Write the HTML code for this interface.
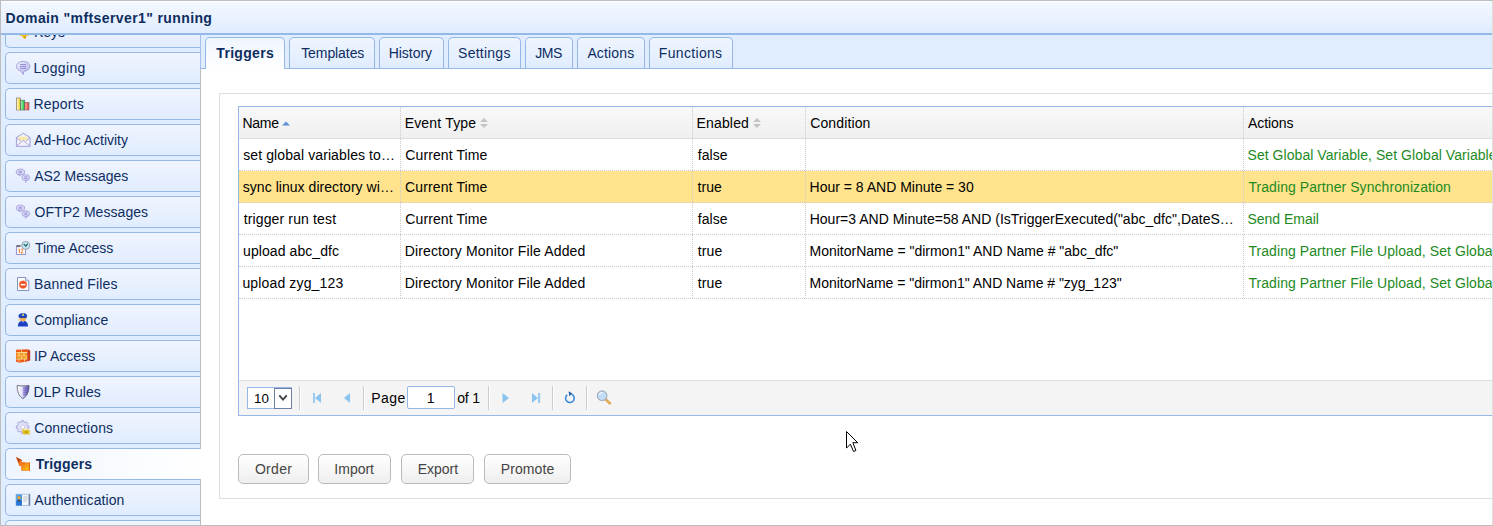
<!DOCTYPE html>
<html lang="en">
<head>
<meta charset="utf-8">
<title>Domain "mftserver1" running</title>
<style>
*{box-sizing:border-box;}
html,body{margin:0;padding:0;}
body{width:1493px;height:526px;overflow:hidden;position:relative;background:#fff;
  font-family:"Liberation Sans",Arial,sans-serif;font-size:14px;color:#000;}
.abs{position:absolute;}
.t{position:relative;white-space:pre;}
/* window frame */
#frameT{left:0;top:0;width:1493px;height:1px;background:#bdbdbd;}
#frameL{left:0;top:0;width:1px;height:526px;background:#bdbdbd;}
#frameR{left:1492px;top:1px;width:1px;height:524px;background:#dedede;}
#frameB{left:0;top:525px;width:1493px;height:1px;background:#bdbdbd;}
/* header */
#hdr{left:1px;top:1px;width:1492px;height:34px;border-top:1px solid #fdfeff;border-bottom:2px solid #95b8e7;
  background:linear-gradient(to bottom,#f3f8ff 0,#e0ecff 100%);}
#hdr>span{position:absolute;left:5px;top:8px;line-height:16px;font-weight:bold;color:#0e2d5f;white-space:nowrap;}
/* sidebar */
#side{left:1px;top:35px;width:199px;height:490px;background:#e0ecff;overflow:hidden;}
#vline{left:200px;top:35px;width:1px;height:490px;background:#bcbcbc;}
#vline2{left:200px;top:35px;width:1px;height:34px;background:#a5bee8;}
.it{position:absolute;left:4px;width:196px;height:32px;border:1px solid #95b8e7;border-right:0;border-radius:5px 0 0 5px;
  background:linear-gradient(to bottom,#eff5ff 0,#e0ecff 100%);color:#0e2d5f;white-space:nowrap;}
.it>span{position:absolute;left:28px;top:7px;line-height:16px;}
.it svg{position:absolute;left:9px;top:7px;width:16px;height:16px;}
.it.sel{background:linear-gradient(to right,#eff5ff 0,#ffffff 100%);font-weight:bold;}
#sidesel{left:200px;top:449px;width:1px;height:30px;background:#fff;}
/* main */
#main{left:201px;top:35px;width:1292px;height:490px;background:#fff;}
#tabstrip{left:0;top:0;width:1292px;height:34px;background:#e0ecff;border-bottom:1px solid #95b8e7;}
.tab{position:absolute;top:2px;height:31px;border:1px solid #95b8e7;border-bottom:0;border-radius:5px 5px 0 0;
  background:linear-gradient(to bottom,#eff5ff 0,#e0ecff 100%);color:#0e2d5f;text-align:center;line-height:30px;white-space:nowrap;}
.tab.sel{background:linear-gradient(to bottom,#eff5ff 0,#ffffff 100%);font-weight:bold;height:32px;}
#box{left:18px;top:58px;width:1290px;height:406px;border:1px solid #ddd;}
/* grid */
#grid{left:37px;top:71px;width:1270px;height:310px;border:1px solid #95b8e7;background:#fff;}
#ghead{left:0;top:0;width:1268px;height:32px;border-bottom:1px solid #ddd;background:linear-gradient(to bottom,#f9f9f9 0,#efefef 100%);}
.hc{position:absolute;top:0;height:31px;border-right:1px dotted #ccc;padding-left:4px;line-height:33px;white-space:nowrap;}
.sa{margin-left:3px;vertical-align:-1px;}
.row{position:absolute;left:0;width:1268px;height:32px;border-bottom:1px dotted #ccc;}
.row.sel{background:#ffe48d;}
.c{position:absolute;top:0;height:31px;border-right:1px dotted #ccc;padding:0 4px;line-height:33px;white-space:nowrap;overflow:hidden;text-overflow:clip;}
.c1{left:0;width:162px;}
.c2{left:162px;width:292px;}
.c3{left:454px;width:113px;}
.c4{left:567px;width:438px;}
.c5{left:1005px;width:263px;border-right:0;color:#1e8a1e;text-overflow:clip;}
#pager{left:0;top:273px;width:1268px;height:35px;border-top:1px solid #ddd;background:#f4f4f4;}
.sep{position:absolute;top:5px;width:2px;height:24px;background:#ccc;border-right:1px solid #fff;}
#psel{left:8px;top:6px;width:45px;height:22px;border:1px solid #95b8e7;background:#fff;font-size:13px;line-height:20px;}
#psel>span{position:absolute;left:6px;top:1px;font-size:13.33px;}
#pselb{position:absolute;left:26px;top:0px;width:18px;height:21px;border:1px solid #6f7fa6;background:#fff;}
#pselb svg{position:absolute;left:0;top:0;}
.ptx{top:9px;line-height:16px;white-space:nowrap;}
#pinp{left:168px;top:5px;width:48px;height:23px;border:1px solid #95b8e7;border-radius:2px;background:#fff;text-align:center;line-height:23px;}
.btn{position:absolute;top:419px;height:30px;border:1px solid #bbb;border-radius:5px;color:#444;text-align:center;line-height:29px;
  background:linear-gradient(to bottom,#ffffff 0,#eeeeee 100%);}
</style>
</head>
<body>
<div id="hdr" class="abs"><span><span class="t" id="hdrt" style="letter-spacing:0.393px;left:-0.40px">Domain "mftserver1" running</span></span></div>

<div id="side" class="abs">
  <div class="it" style="top:-19px"><svg viewBox="0 0 16 16"><path d="M5 9h8.5v3H11v2.5H8.5L7 12H5z" fill="#f2c41a"/><path d="M8.5 12l1 2.5h1.5V12z" fill="#d9a400"/></svg><span><span class="t" id="s0">Keys</span></span></div>
  <div class="it" style="top:17px"><svg viewBox="0 0 16 16"><defs><linearGradient id="gb" x1="0" y1="0" x2="1" y2="1"><stop offset="0" stop-color="#f2f1fd"/><stop offset="1" stop-color="#b5b0e8"/></linearGradient></defs><path d="M8.3 1.4c3.8 0 6.6 2.1 6.6 4.9 0 2.7-2.6 4.7-6 4.9l-.6 3.3-2.6-3.6C3 10.200 1.400 8.500 1.400 6.300c0-2.800 3-4.900 6.900-4.900z" fill="url(#gb)" stroke="#9d98d4" stroke-width="0.9"/><path d="M5 4.500h6.200M5 6.500h6.200M5 8.400h6.200" stroke="#8c86d6" stroke-width="0.9"/></svg><span><span class="t" id="s1" style="letter-spacing:0.339px;left:-0.54px">Logging</span></span></div>
  <div class="it" style="top:53px"><svg viewBox="0 0 16 16"><rect x="1.500" y="2" width="4" height="12" fill="#f6d04a" stroke="#6b6b6b" stroke-width="0.6"/><rect x="2" y="2.500" width="1.500" height="11.500" fill="#fdf0a8"/><rect x="5.500" y="4.200" width="4.200" height="9.800" fill="#3fce5a" stroke="#5f5f5f" stroke-width="0.600"/><rect x="6" y="4.700" width="1.500" height="9" fill="#8ce79b"/><rect x="9.700" y="6.600" width="4.300" height="7.400" fill="#ee5a55" stroke="#5f5f5f" stroke-width="0.600"/><rect x="10.200" y="7.100" width="1.500" height="6.700" fill="#f69a94"/></svg><span><span class="t" id="s2" style="letter-spacing:0.212px;left:-0.47px">Reports</span></span></div>
  <div class="it" style="top:89px"><svg viewBox="0 0 16 16"><path d="M1.400 5.600L8.200 1.300 15 5.600V14.300H1.400z" fill="#f4f3fc" stroke="#9a94d2" stroke-width="0.900"/><rect x="3.600" y="4.800" width="8.800" height="3.400" fill="#f8eaa6"/><path d="M1.500 14.200L8.200 8.300 14.900 14.200M1.500 5.800l4.300 3.300M14.900 5.800l-4.300 3.300" fill="none" stroke="#9a94d2" stroke-width="0.800"/></svg><span><span class="t" id="s3" style="letter-spacing:-0.027px;left:0.17px">Ad-Hoc Activity</span></span></div>
  <div class="it" style="top:125px"><svg viewBox="0 0 16 16"><ellipse cx="5.400" cy="4" rx="4.200" ry="2.900" fill="#dcdaf6" stroke="#9d98d4" stroke-width="0.800"/><path d="M3 6l1.800 2.200.8-1.700z" fill="#c1bdec" stroke="#9d98d4" stroke-width="0.500"/><path d="M3.600 3.300h3.600M3.600 4.800h3.600" stroke="#8c86d6" stroke-width="0.800"/><ellipse cx="10.800" cy="9.600" rx="3.900" ry="2.900" fill="#dcdaf6" stroke="#9d98d4" stroke-width="0.800"/><path d="M10.200 12.300l.5 2.300 1.900-2.600z" fill="#c1bdec" stroke="#9d98d4" stroke-width="0.500"/><path d="M9.200 8.900h3.400M9.200 10.400h3.400" stroke="#8c86d6" stroke-width="0.800"/></svg><span><span class="t" id="s4" style="letter-spacing:0.001px;left:0.17px">AS2 Messages</span></span></div>
  <div class="it" style="top:161px"><svg viewBox="0 0 16 16"><ellipse cx="5.400" cy="4" rx="4.200" ry="2.900" fill="#dcdaf6" stroke="#9d98d4" stroke-width="0.800"/><path d="M3 6l1.800 2.200.8-1.700z" fill="#c1bdec" stroke="#9d98d4" stroke-width="0.500"/><path d="M3.600 3.300h3.600M3.600 4.800h3.600" stroke="#8c86d6" stroke-width="0.800"/><ellipse cx="10.800" cy="9.600" rx="3.900" ry="2.900" fill="#dcdaf6" stroke="#9d98d4" stroke-width="0.800"/><path d="M10.200 12.300l.5 2.300 1.900-2.600z" fill="#c1bdec" stroke="#9d98d4" stroke-width="0.500"/><path d="M9.200 8.900h3.400M9.200 10.400h3.400" stroke="#8c86d6" stroke-width="0.800"/></svg><span><span class="t" id="s5" style="letter-spacing:0.052px;left:0.59px">OFTP2 Messages</span></span></div>
  <div class="it" style="top:197px"><svg viewBox="0 0 16 16"><rect x="1.400" y="5.700" width="9.200" height="8.700" fill="#fbfbff" stroke="#8d88c8" stroke-width="0.900"/><rect x="1.800" y="5.300" width="3.600" height="1.800" fill="#6b6b78"/><path d="M3.400 9.200h1v3.600M6 9.600c.3-.7 2-.7 2 .4 0 1-2 1.600-2 2.800h2.200" fill="none" stroke="#ee7a2a" stroke-width="1"/><circle cx="10.800" cy="5.400" r="4" fill="#c3e6ee" stroke="#9a9aa8" stroke-width="0.900"/><path d="M8.700 4.100l2.100 2.100 1.900-2.600" fill="none" stroke="#1f5a6a" stroke-width="1.200"/></svg><span><span class="t" id="s6" style="letter-spacing:-0.043px;left:0.91px">Time Access</span></span></div>
  <div class="it" style="top:233px"><svg viewBox="0 0 16 16"><path d="M2.500 1.500h8l3.300 3.300v9.700H2.500z" fill="#fdfdff" stroke="#7d88b4" stroke-width="0.900"/><path d="M10.500 1.500v3.300h3.300" fill="#dfe6f7" stroke="#7d88b4" stroke-width="0.700"/><circle cx="8" cy="8.600" r="3.900" fill="#ee4a1e"/><circle cx="8" cy="8.600" r="3.900" fill="none" stroke="#f7a07a" stroke-width="0.500"/><rect x="5.600" y="7.800" width="4.800" height="1.700" fill="#fff3ec"/></svg><span><span class="t" id="s7" style="letter-spacing:0.142px;left:0.12px">Banned Files</span></span></div>
  <div class="it" style="top:269px"><svg viewBox="0 0 16 16"><path d="M3.300 4.400c0-2.200 2-3.500 4.600-3.500 2.400 0 4.300 1.200 4.300 3.300l-1 1.600H4.600z" fill="#2446c4"/><path d="M7.200 1.600h1.800v2.400H7.200z" fill="#b7c96a"/><path d="M4.400 5.400h7v1H4.400z" fill="#16246e"/><rect x="5.200" y="5.900" width="5.500" height="3.300" rx="1.200" fill="#f6b04c"/><path d="M3.300 7.200h2v1.300h-2z" fill="#f9c877"/><path d="M2.900 14.600c0-3.800 1.600-5.600 5.100-5.600s5 1.800 5 5.600z" fill="#1f3fc2"/><path d="M7 9.200l1 1.600 1-1.600z" fill="#dfe6ff"/></svg><span><span class="t" id="s8" style="letter-spacing:0.008px;left:0.20px">Compliance</span></span></div>
  <div class="it" style="top:305px"><svg viewBox="0 0 16 16"><path d="M1 1.800l11.200-.6v12.300L4 14.800 1 13.400z" fill="#ee5a14"/><path d="M12.200 1.200l3 1v10.300l-3 1z" fill="#c8401a"/><path d="M1.200 4.800l11-.3M1.200 8l11-.2M1.200 11l11-.1" stroke="#fbe9a8" stroke-width="1"/><path d="M2 5.300h9.800v2.200H2zM2 8.500h9.800v2H2z" fill="#f4a422"/><path d="M6.500 1.600v3M4 5v3M9 5v3M6.500 8v3M4 11v3M9.500 11v2.500" stroke="#fde8b0" stroke-width="0.700"/><path d="M9.800 8.600h2.200v2H9.800z" fill="#f7d23a"/></svg><span><span class="t" id="s9" style="letter-spacing:0.003px;left:-0.09px">IP Access</span></span></div>
  <div class="it" style="top:341px"><svg viewBox="0 0 16 16"><defs><linearGradient id="gs" x1="0" y1="0" x2="1" y2="0"><stop offset="0" stop-color="#ffffff"/><stop offset="0.400" stop-color="#e6e3fb"/><stop offset="0.650" stop-color="#9d93e0"/><stop offset="1" stop-color="#5a4fb0"/></linearGradient></defs><path d="M2.200 1.400c3.800.7 7.800.7 11.800 0 .2 5.600-1.600 10.600-6.200 13.300C3.600 12 2 7 2.200 1.400z" fill="url(#gs)" stroke="#55556a" stroke-width="0.800"/><path d="M8 4.300h5.400M8 6.300h5M8 8.300h4.300M8 10.300h3.200" stroke="#4d44a0" stroke-width="0.700" opacity="0.700"/></svg><span><span class="t" id="s10" style="letter-spacing:0.077px;left:-0.44px">DLP Rules</span></span></div>
  <div class="it" style="top:377px"><svg viewBox="0 0 16 16"><path d="M13.90 5.90 L13.90 8.10 L12.46 8.17 L11.86 9.61 L12.84 10.68 L11.28 12.24 L10.21 11.26 L8.77 11.86 L8.70 13.30 L6.50 13.30 L6.43 11.86 L4.99 11.26 L3.92 12.24 L2.36 10.68 L3.34 9.61 L2.74 8.17 L1.30 8.10 L1.30 5.90 L2.74 5.83 L3.34 4.39 L2.36 3.32 L3.92 1.76 L4.99 2.74 L6.43 2.14 L6.50 0.70 L8.70 0.70 L8.77 2.14 L10.21 2.74 L11.28 1.76 L12.84 3.32 L11.86 4.39 L12.46 5.83z" fill="#e4e2f7" stroke="#a29dd6" stroke-width="0.900" stroke-linejoin="round"/><circle cx="7.600" cy="7" r="2.100" fill="#f6f5fd" stroke="#b4b0e0" stroke-width="0.600"/><path d="M7 10.200c0-1.700 3.200-2.200 3.700-.7.600-1.300 4-.8 4 1.300l-.3 3.600h-2.300l-.6-1-.8 1H8.300z" fill="#e2c21c"/><path d="M7.300 9.600c.6-1.300 2.700-1.500 3.400-.3.700-1 3.300-.8 3.800.7-1-.8-2.600-.8-3.500.2-1-.9-2.600-1-3.700-.6z" fill="#fbf8e4"/><path d="M10.300 11l.9 2.600.9-2.400" fill="none" stroke="#a8880c" stroke-width="0.700"/></svg><span><span class="t" id="s11" style="letter-spacing:0.108px;left:0.20px">Connections</span></span></div>
  <div class="it sel" style="top:413px"><svg viewBox="0 0 16 16"><defs><linearGradient id="gt" x1="0" y1="0" x2="1" y2="1"><stop offset="0" stop-color="#f0701c"/><stop offset="1" stop-color="#f7cc10"/></linearGradient></defs><path d="M1 1l6.200 3.200L6.400 6l4.200.2V6.400H15v8.400H6.200V9.400L4.400 10.600z" fill="#f07a1c"/><path d="M1 1l3 6 .8-2.600L7.600 4.600z" fill="#b8401c"/><rect x="6.800" y="7.200" width="7.300" height="7" fill="url(#gt)"/><path d="M14.400 6.400v8.400" stroke="#e46a10" stroke-width="1.200"/></svg><span><span class="t" id="s12" style="letter-spacing:0.164px;left:1.73px">Triggers</span></span></div>
  <div class="it" style="top:449px"><svg viewBox="0 0 16 16"><rect x="1" y="2.200" width="14" height="11.300" fill="#f2f5fa" stroke="#8fb4e4" stroke-width="0.700"/><rect x="1.200" y="2.400" width="5.800" height="11" fill="#4a9be6"/><rect x="1.200" y="8.600" width="5.800" height="4.800" fill="#2a76d8"/><circle cx="4" cy="5.700" r="1.600" fill="#f4a020"/><path d="M2.400 9.200c0-2 3.200-2 3.200 0z" fill="#55412a"/><path d="M8.400 5h4M8.400 7h4M8.400 9h3" stroke="#b8bec8" stroke-width="0.900"/><path d="M14.300 2.200v11.300" stroke="#6c7c98" stroke-width="1.400"/></svg><span><span class="t" id="s13" style="letter-spacing:0.102px;left:0.35px">Authentication</span></span></div>
  <div class="it" style="top:485px"><span>&nbsp;</span></div>
</div>

<div id="main" class="abs">
  <div id="tabstrip" class="abs">
    <div class="tab sel" style="left:4px;width:80px"><span class="t" id="tab0" style="letter-spacing:0.312px;left:0.19px">Triggers</span></div>
    <div class="tab" style="left:88px;width:86px"><span class="t" id="tab1" style="letter-spacing:-0.082px;left:0.74px">Templates</span></div>
    <div class="tab" style="left:178px;width:65px"><span class="t" id="tab2" style="letter-spacing:-0.051px;left:-1.17px">History</span></div>
    <div class="tab" style="left:247px;width:73px"><span class="t" id="tab3" style="letter-spacing:0.240px;left:-0.13px">Settings</span></div>
    <div class="tab" style="left:324px;width:48px"><span class="t" id="tab4" style="letter-spacing:-0.542px;left:-0.49px">JMS</span></div>
    <div class="tab" style="left:376px;width:68px"><span class="t" id="tab5" style="letter-spacing:0.140px;left:-0.16px">Actions</span></div>
    <div class="tab" style="left:448px;width:84px"><span class="t" id="tab6" style="letter-spacing:0.323px;left:-0.37px">Functions</span></div>
  </div>
  <div id="box" class="abs"></div>
  <div id="grid" class="abs">
    <div id="ghead" class="abs">
      <div class="hc c1"><span class="t" id="h1" style="letter-spacing:-0.302px;left:-0.48px">Name</span><svg class="sa" width="8" height="10" viewBox="0 0 8 10"><path d="M0 6.500L4 2.500 8 6.500z" fill="#5b8fd6"/></svg></div>
      <div class="hc c2"><span class="t" id="h2" style="letter-spacing:0.183px;left:-0.35px">Event Type</span><svg class="sa" width="8" height="12" viewBox="0 0 8 12"><path d="M0 5L4 1 8 5z" fill="#c4c4c4"/><path d="M0 7L4 11 8 7z" fill="#c4c4c4"/></svg></div>
      <div class="hc c3"><span class="t" id="h3" style="letter-spacing:0.171px;left:-0.53px">Enabled</span><svg class="sa" width="8" height="12" viewBox="0 0 8 12"><path d="M0 5L4 1 8 5z" fill="#c4c4c4"/><path d="M0 7L4 11 8 7z" fill="#c4c4c4"/></svg></div>
      <div class="hc c4"><span class="t" id="h4" style="letter-spacing:0.135px;left:0.17px">Condition</span></div>
      <div class="hc c5" style="color:#000"><span class="t" id="h5" style="letter-spacing:-0.040px;left:-0.08px">Actions</span></div>
    </div>
    <div class="row" style="top:32px"><div class="c c1"><span class="t" id="r1c1" style="letter-spacing:0.106px;left:0.16px">set global variables to…</span></div><div class="c c2"><span class="t" id="r1c2" style="letter-spacing:0.107px;left:0.27px">Current Time</span></div><div class="c c3"><span class="t" id="r1c3" style="letter-spacing:0.099px;left:0.69px">false</span></div><div class="c c4"></div><div class="c c5"><span class="t" id="r1c5" style="letter-spacing:0.053px;left:-0.50px">Set Global Variable, Set Global Variable, Set Global Variable</span></div></div>
    <div class="row sel" style="top:64px"><div class="c c1"><span class="t" id="r2c1" style="letter-spacing:0.041px;left:-0.23px">sync linux directory wi…</span></div><div class="c c2"><span class="t" id="r2c2" style="letter-spacing:0.128px;left:0.07px">Current Time</span></div><div class="c c3"><span class="t" id="r2c3" style="letter-spacing:0.121px;left:0.41px">true</span></div><div class="c c4"><span class="t" id="r2c4" style="letter-spacing:-0.004px;left:-0.45px">Hour = 8 AND Minute = 30</span></div><div class="c c5"><span class="t" id="r2c5" style="letter-spacing:0.071px;left:0.42px">Trading Partner Synchronization</span></div></div>
    <div class="row" style="top:96px"><div class="c c1"><span class="t" id="r3c1" style="letter-spacing:0.137px;left:0.71px">trigger run test</span></div><div class="c c2"><span class="t" id="r3c2" style="letter-spacing:0.107px;left:0.27px">Current Time</span></div><div class="c c3"><span class="t" id="r3c3" style="letter-spacing:0.099px;left:0.69px">false</span></div><div class="c c4"><span class="t" id="r3c4" style="letter-spacing:0.014px;left:-0.35px">Hour=3 AND Minute=58 AND (IsTriggerExecuted("abc_dfc",DateS…</span></div><div class="c c5"><span class="t" id="r3c5" style="letter-spacing:-0.021px;left:-0.57px">Send Email</span></div></div>
    <div class="row" style="top:128px"><div class="c c1"><span class="t" id="r4c1" style="letter-spacing:0.083px;left:0.04px">upload abc_dfc</span></div><div class="c c2"><span class="t" id="r4c2" style="letter-spacing:0.149px;left:-0.33px">Directory Monitor File Added</span></div><div class="c c3"><span class="t" id="r4c3" style="letter-spacing:0.146px;left:0.72px">true</span></div><div class="c c4"><span class="t" id="r4c4" style="letter-spacing:-0.004px;left:-0.49px">MonitorName = "dirmon1" AND Name # "abc_dfc"</span></div><div class="c c5"><span class="t" id="r4c5" style="letter-spacing:0.073px;left:0.41px">Trading Partner File Upload, Set Global Variable</span></div></div>
    <div class="row" style="top:160px"><div class="c c1"><span class="t" id="r5c1" style="letter-spacing:0.149px;left:-0.61px">upload zyg_123</span></div><div class="c c2"><span class="t" id="r5c2" style="letter-spacing:0.149px;left:-0.33px">Directory Monitor File Added</span></div><div class="c c3"><span class="t" id="r5c3" style="letter-spacing:0.146px;left:0.72px">true</span></div><div class="c c4"><span class="t" id="r5c4" style="letter-spacing:-0.017px;left:-0.48px">MonitorName = "dirmon1" AND Name # "zyg_123"</span></div><div class="c c5"><span class="t" id="r5c5" style="letter-spacing:0.073px;left:0.41px">Trading Partner File Upload, Set Global Variable</span></div></div>
    <div id="pager" class="abs">
      <div class="abs" id="psel"><span>10</span><div id="pselb"><svg viewBox="0 0 16 19" width="16" height="19"><path d="M4.300 6.300L8 10.600 11.700 6.300" fill="none" stroke="#444" stroke-width="1.900"/></svg></div></div>
      <div class="sep" style="left:60px"></div>
      <svg class="abs" style="left:72px;top:10px" width="12" height="14" viewBox="0 0 12 14"><path d="M2 2h2v10H2z" fill="#9ccaf0"/><path d="M10 2v10L4 7z" fill="#8cc4f0"/></svg>
      <svg class="abs" style="left:102px;top:10px" width="12" height="14" viewBox="0 0 12 14"><path d="M9 2v10L3 7z" fill="#8cc4f0"/></svg>
      <div class="sep" style="left:124px"></div>
      <span class="abs ptx" style="left:133px"><span class="t" id="pg" style="letter-spacing:0.382px;left:-0.68px">Page</span></span>
      <div class="abs" id="pinp"><span class="t" id="p1" style="left:-0.36px">1</span></div>
      <span class="abs ptx" style="left:218px"><span class="t" id="of" style="letter-spacing:-0.216px;left:0.28px">of 1</span></span>
      <div class="sep" style="left:249px"></div>
      <svg class="abs" style="left:261px;top:10px" width="12" height="14" viewBox="0 0 12 14"><path d="M2.500 2v10L9 7z" fill="#8cc4f0"/></svg>
      <svg class="abs" style="left:291px;top:10px" width="12" height="14" viewBox="0 0 12 14"><path d="M2 2v10L8 7z" fill="#8cc4f0"/><path d="M8 2h2.200v10H8z" fill="#9ccaf0"/></svg>
      <div class="sep" style="left:313px"></div>
      <svg class="abs" style="left:323px;top:9px" width="16" height="16" viewBox="0 0 16 16"><path d="M9.600 4.300A4.300 4.300 0 1 1 5.200 4.900" fill="none" stroke="#3b8ad8" stroke-width="1.600"/><path d="M6.600 1.200L10.400 3.600 7.200 6.200z" fill="#2a5fa8"/></svg>
      <div class="sep" style="left:347px"></div>
      <svg class="abs" style="left:356px;top:8px" width="18" height="18" viewBox="0 0 18 18"><path d="M10.600 10.300l4.300 4.100" stroke="#d9952a" stroke-width="2.300" stroke-linecap="round"/><path d="M10.600 10.300l4.300 4.100" stroke="#f7d9a0" stroke-width="0.700" stroke-linecap="round"/><circle cx="7.100" cy="6.700" r="4.800" fill="#c4ddf6" stroke="#a3acbc" stroke-width="1.100"/><path d="M4.200 5.800a3.200 3.200 0 0 1 3.600-2.200" fill="none" stroke="#eef6fe" stroke-width="1.200"/></svg>
    </div>
  </div>
  <div class="btn" style="left:37px;width:71px"><span class="t" id="b0" style="letter-spacing:0.292px;left:0.06px">Order</span></div>
  <div class="btn" style="left:117px;width:73px"><span class="t" id="b1" style="letter-spacing:-0.012px;left:-0.34px">Import</span></div>
  <div class="btn" style="left:200px;width:73px"><span class="t" id="b2" style="letter-spacing:-0.045px;left:0.40px">Export</span></div>
  <div class="btn" style="left:283px;width:87px"><span class="t" id="b3" style="letter-spacing:0.115px;left:0.05px">Promote</span></div>
</div>
<div id="vline" class="abs"></div><div id="vline2" class="abs"></div>
<div id="sidesel" class="abs"></div>

<svg class="abs" style="left:845px;top:430px" width="14" height="23" viewBox="0 0 14 23"><path d="M1.500 1.500V18.100L5.400 14.200 8.500 21.500 10.900 20.500 7.900 12.700H12.700z" fill="#fff" stroke="#000" stroke-width="1"/></svg>
<div id="frameT" class="abs"></div>
<div id="frameL" class="abs"></div>
<div id="frameR" class="abs"></div>
<div id="frameB" class="abs"></div>
</body>
</html>
